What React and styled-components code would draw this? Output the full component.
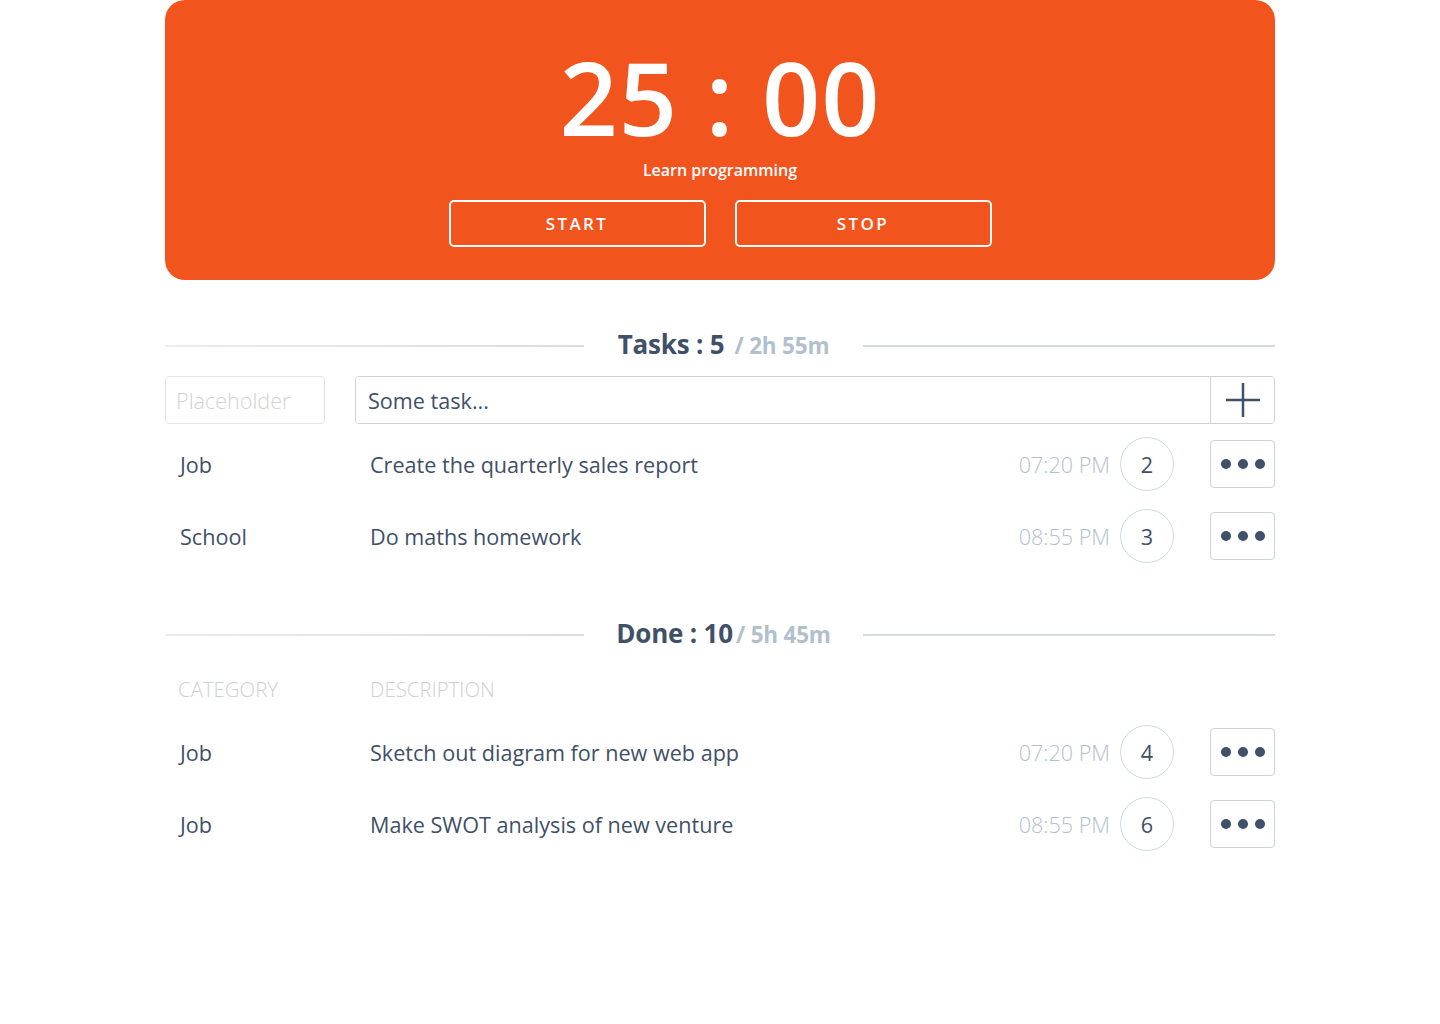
import React from 'react';
import styled, { createGlobalStyle } from 'styled-components';

const GlobalStyle = createGlobalStyle`
  body {
    margin: 0;
    background: #ffffff;
    font-family: 'Open Sans', 'Noto Sans', sans-serif;
    color: #3f5068;
  }
`;

const Page = styled.div`
  width: 1110px;
  margin: 0 auto;
  padding-bottom: 80px;
`;

// Timer card
const TimerCard = styled.div`
  height: 280px;
  box-sizing: border-box;
  background: #f2541d;
  border-radius: 20px;
  display: flex;
  flex-direction: column;
  align-items: center;
  padding-top: 46px;
  color: #ffffff;
`;

const Clock = styled.div`
  font-size: 102px;
  font-weight: 600;
  line-height: 1;
  letter-spacing: 1px;
`;

const TimerLabel = styled.div`
  margin-top: 11px;
  font-size: 16px;
  font-weight: 600;
  line-height: 22px;
`;

const ButtonRow = styled.div`
  display: flex;
  gap: 29px;
  margin-top: 19px;
`;

const TimerButton = styled.button`
  width: 257px;
  height: 47px;
  background: transparent;
  border: 2px solid #ffffff;
  border-radius: 5px;
  color: #ffffff;
  font-family: inherit;
  font-size: 17px;
  font-weight: 600;
  letter-spacing: 2.4px;
  cursor: pointer;
`;

// Section heading with rules
const SectionHead = styled.div`
  display: grid;
  grid-template-columns: 419px 1fr 412px;
  align-items: center;
  height: 40px;
  margin-top: ${(p) => p.$top}px;
`;

const Rule = styled.div`
  height: 2px;
  background: ${(p) => (p.$left ? 'linear-gradient(90deg, #ececec, #dcdcdc)' : '#d3dae2')};
  margin-top: 3px;
`;

const HeadText = styled.div`
  text-align: center;
  white-space: nowrap;
  font-size: 26px;
  font-weight: 700;
  color: #3f5068;
  letter-spacing: -0.2px;
`;

const HeadSub = styled.span`
  font-size: 22.5px;
  font-weight: 700;
  color: #b2bfcc;
  margin-left: ${(p) => p.$gap}px;
`;

// Input row
const InputRow = styled.div`
  display: flex;
  gap: 30px;
  margin-top: 12px;
  height: 48px;
`;

const CategoryInput = styled.input`
  width: 160px;
  box-sizing: border-box;
  border: 1px solid #e4e4e4;
  border-radius: 4px;
  padding: 0 10px;
  font-family: inherit;
  font-size: 21.6px;
  font-weight: 300;
  color: #3f5068;
  outline: none;
  &::placeholder {
    color: #d2d2d2;
  }
`;

const TaskField = styled.div`
  flex: 1;
  display: flex;
  border: 1px solid #cad3dc;
  border-radius: 4px;
  overflow: hidden;
`;

const TaskInput = styled.input`
  flex: 1;
  border: none;
  padding: 0 12px;
  font-family: inherit;
  font-size: 21.6px;
  font-weight: 500;
  color: #3f5068;
  outline: none;
`;

const AddButton = styled.button`
  width: 64px;
  border: none;
  border-left: 1px solid #cad3dc;
  background: #ffffff;
  display: flex;
  align-items: center;
  justify-content: center;
  padding: 0;
`;

// Task rows
const List = styled.div`
  margin-top: ${(p) => p.$top}px;
  display: flex;
  flex-direction: column;
`;

const Row = styled.div`
  display: flex;
  align-items: center;
  height: 72px;
`;

const Category = styled.div`
  width: 190px;
  padding-left: 15px;
  font-size: 21.6px;
  font-weight: 500;
  color: #3f5068;
`;

const Description = styled.div`
  flex: 1;
  font-size: 21.6px;
  font-weight: 500;
  color: #3f5068;
`;

const Time = styled.div`
  font-size: 21.6px;
  font-weight: 300;
  color: #b3c0cd;
  margin-right: 10px;
`;

const Count = styled.div`
  width: 52px;
  height: 52px;
  border: 1px solid #cfd8e1;
  border-radius: 50%;
  display: flex;
  align-items: center;
  justify-content: center;
  font-size: 21.6px;
  font-weight: 500;
  color: #3f5068;
  margin-right: 36px;
`;

const MoreButton = styled.button`
  width: 65px;
  height: 48px;
  box-sizing: border-box;
  border: 1px solid #cad3dc;
  border-radius: 4px;
  background: #ffffff;
  display: flex;
  align-items: center;
  justify-content: center;
  gap: 7px;
  padding: 0;
`;

const Dot = styled.span`
  width: 10px;
  height: 10px;
  border-radius: 50%;
  background: #3f5068;
`;

const ColumnHeader = styled.div`
  display: flex;
  align-items: center;
  height: 40px;
  margin-top: 16px;
  font-size: 20.4px;
  font-weight: 300;
  color: #d0d0d0;
  text-transform: uppercase;
`;

const HeaderCell = styled.div`
  width: ${(p) => p.$w || 'auto'};
  padding-left: ${(p) => p.$pl || 0}px;
`;

const tasks = [
  { cat: 'Job', desc: 'Create the quarterly sales report', time: '07:20 PM', count: 2 },
  { cat: 'School', desc: 'Do maths homework', time: '08:55 PM', count: 3 },
];

const done = [
  { cat: 'Job', desc: 'Sketch out diagram for new web app', time: '07:20 PM', count: 4 },
  { cat: 'Job', desc: 'Make SWOT analysis of new venture', time: '08:55 PM', count: 6 },
];

function TaskRow({ task }) {
  return (
    <Row>
      <Category>{task.cat}</Category>
      <Description>{task.desc}</Description>
      <Time>{task.time}</Time>
      <Count>{task.count}</Count>
      <MoreButton>
        <Dot />
        <Dot />
        <Dot />
      </MoreButton>
    </Row>
  );
}

export default function App() {
  return (
    <>
      <GlobalStyle />
      <Page>
        <TimerCard>
          <Clock>25 : 00</Clock>
          <TimerLabel>Learn programming</TimerLabel>
          <ButtonRow>
            <TimerButton>START</TimerButton>
            <TimerButton>STOP</TimerButton>
          </ButtonRow>
        </TimerCard>

        <SectionHead $top={44}>
          <Rule $left />
          <HeadText>
            Tasks : 5<HeadSub $gap={10}>/ 2h 55m</HeadSub>
          </HeadText>
          <Rule />
        </SectionHead>

        <InputRow>
          <CategoryInput placeholder="Placeholder" />
          <TaskField>
            <TaskInput defaultValue="Some task..." />
            <AddButton>
              <svg width="36" height="36" viewBox="0 0 36 36">
                <path d="M18 1v34M1 18h34" stroke="#3f5068" strokeWidth="2.5" fill="none" />
              </svg>
            </AddButton>
          </TaskField>
        </InputRow>

        <List $top={4}>
          {tasks.map((t, i) => (
            <TaskRow key={i} task={t} />
          ))}
        </List>

        <SectionHead $top={41}>
          <Rule $left />
          <HeadText>
            Done : 10<HeadSub $gap={3}>/ 5h 45m</HeadSub>
          </HeadText>
          <Rule />
        </SectionHead>

        <ColumnHeader>
          <HeaderCell $w="192px" $pl={13}>Category</HeaderCell>
          <HeaderCell>Description</HeaderCell>
        </ColumnHeader>

        <List $top={7}>
          {done.map((t, i) => (
            <TaskRow key={i} task={t} />
          ))}
        </List>
      </Page>
    </>
  );
}
